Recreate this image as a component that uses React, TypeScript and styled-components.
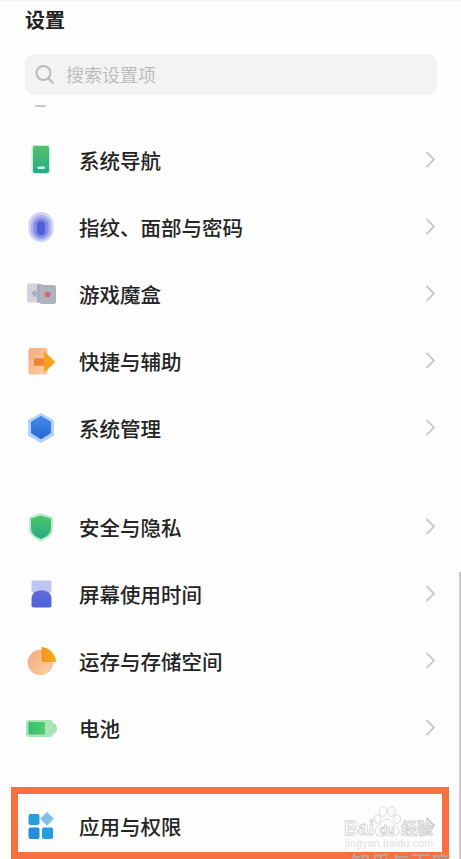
import React from 'react';
import styled, { createGlobalStyle } from 'styled-components';

const GlobalStyle = createGlobalStyle`
  * { box-sizing: border-box; }
  body { margin: 0; background: #fdfdfd; font-family: "Noto Sans CJK SC", sans-serif; }
`;

const Screen = styled.main`
  position: relative;
  width: 461px;
  height: 859px;
  overflow: hidden;
  background: #fdfdfd;
  border-top: 1px solid #f5f5f5;
`;

const Header = styled.header`
  height: 104px;
  padding: 4px 24px 0 25px;
`;

const Title = styled.h1`
  margin: 0;
  height: 30px;
  line-height: 30px;
  font-size: 20px;
  font-weight: 700;
  color: #222;
`;

const SearchBar = styled.div`
  display: flex;
  align-items: center;
  gap: 11px;
  height: 41px;
  margin-top: 19px;
  padding: 0 10px;
  border-radius: 9px;
  background: #f3f3f3;
  color: #bcbcbc;
  font-size: 18px;
  line-height: 26px;
`;

const SearchHint = styled.span`
  margin-top: -2px;
`;

const PreviousIcon = styled.div`
  width: 11px;
  height: 2px;
  margin-left: 35px;
  border-radius: 0 0 5px 5px;
  background: #c8c8ca;
`;

const List = styled.ul<{ $top: number }>`
  list-style: none;
  margin: ${p => p.$top}px 0 0;
  padding: 0;
`;

const Row = styled.li`
  display: flex;
  align-items: center;
  height: 67.2px;
  padding: 0 24px 0 25px;
`;

const IconSlot = styled.span`
  width: 54px;
  height: 32px;
  flex: none;
`;

const Label = styled.span`
  flex: 1;
  font-size: 20.5px;
  font-weight: 500;
  line-height: 30px;
  color: #242424;
`;

const Highlight = styled.div`
  position: absolute;
  left: 11px;
  top: 786px;
  width: 438px;
  height: 72px;
  border: 7px solid #f86f40;
`;

const ScrollThumb = styled.div`
  position: absolute;
  right: 0;
  top: 571px;
  width: 2px;
  height: 288px;
  background: #c9c9c9;
`;

const Watermark = styled.svg`
  position: absolute;
  left: 340px;
  top: 799px;
`;

const NextLabel = styled.div`
  position: absolute;
  left: 351px;
  top: 850px;
  height: 8px;
  overflow: hidden;
  font-size: 20px;
  line-height: 24px;
  font-weight: 500;
  color: #b9a49c;
  white-space: nowrap;
`;

type Kind = 'nav' | 'finger' | 'game' | 'shortcut' | 'system' | 'shield' | 'time' | 'storage' | 'battery' | 'apps';

const drawings: Record<Kind, React.ReactNode> = {
  nav: <>
    <rect x="6.5" y="1" width="19" height="29" rx="3" fill="#c4efdc" />
    <rect x="8" y="2" width="16" height="27" rx="2" fill="url(#green)" />
    <rect x="12.5" y="22.500" width="7.5" height="2.5" rx="1" fill="#c6f6ee" />
  </>,
  finger: <>
    <rect x="3.5" y="1" width="25" height="30" rx="12.5" fill="#cfd3f5" />
    <rect x="6" y="4" width="20" height="25" rx="10" fill="#aab1ee" />
    <rect x="8.500" y="7" width="15" height="20" rx="7.500" fill="#818be5" />
    <rect x="12" y="10" width="8" height="14" rx="4" fill="#505fd7" />
  </>,
  game: <>
    <rect x="2" y="5.500" width="15" height="19" rx="2" fill="#d2d3da" />
    <rect x="12" y="6.500" width="6" height="18" fill="#a5abb8" />
    <rect x="14.500" y="7" width="16.500" height="19" rx="2" fill="#adb2bc" />
    <path d="M9.500 12.500v6M6.500 15.500h6" stroke="#a6aabd" strokeWidth="2.500" />
    <circle cx="22.700" cy="16.500" r="2.800" fill="#d5686a" />
  </>,
  shortcut: <>
    <rect x="3.500" y="3" width="19" height="26.500" rx="2.500" fill="url(#peach)" />
    <path d="M9 13.500h10V8q0-1.500 1.500-.5l9 8.500q1 1 0 2l-9 8.500q-1.500 1-1.500-.5v-5.500H9z" fill="url(#orange)" />
    <path d="M9 13.500h10v7H9z" fill="#ed8435" />
  </>,
  system: <>
    <path d="M16 1.500l12.500 7v15L16 30.500l-12.500-7v-15z" fill="#b5d0f4" stroke="#b5d0f4" strokeLinejoin="round" />
    <path d="M16 4.500l9.500 5.500v11L16 27l-9.500-6V10z" fill="url(#blue)" stroke="#347bdc" strokeLinejoin="round" />
  </>,
  shield: <>
    <path d="M16 2l12 4v12c0 6-6 10-12 12.500C10 28 4 24 4 18V6z" fill="#bceccd" />
    <path d="M16 4.500l10 3v10c0 5-4 8-10 10.500-6-2.500-10-5.500-10-10.500v-10z" fill="url(#green)" />
  </>,
  time: <>
    <path d="M8.500 2.500h16q2 0 2 2v7q0 3-3 4h-14q-3-1-3-4v-7q0-2 2-2z" fill="#bfc4f1" />
    <path d="M6.500 27.500v-7c0-11 20-11 20 0v7q0 2-2 2h-16q-2 0-2-2z" fill="url(#violet)" />
  </>,
  storage: <>
    <circle cx="15.500" cy="17.500" r="12.800" fill="url(#peach)" />
    <path d="M16.500 2C24 2.500 31 8.500 31 17H18q-1.500 0-1.500-1.500z" fill="url(#orange)" />
  </>,
  battery: <>
    <rect x="1" y="8" width="27" height="17" rx="3" fill="#a9e6b6" />
    <path d="M28 11.500q4 0 4 5t-4 5z" fill="#a1e2af" />
    <rect x="3.500" y="10" width="16.500" height="12.500" rx="1" fill="url(#battery)" />
  </>,
  apps: <>
    <rect x="3.500" y="4" width="11" height="11" rx="2" fill="#289ddd" />
    <path d="M22 2.500l6.500 6.300-6.500 6.400-6.500-6.400z" fill="#80bfea" stroke="#80bfea" strokeLinejoin="round" />
    <rect x="3.500" y="17.500" width="11" height="11.500" rx="2" fill="#258fdd" />
    <rect x="17" y="17.500" width="11" height="11.500" rx="2" fill="#269ddd" />
  </>,
};

const Gradients = () => (
  <svg width="0" height="0" display="block">
    <defs>
      <linearGradient id="green" x2="0" y2="1"><stop stopColor="#50c568" /><stop offset="1" stopColor="#28aa8a" /></linearGradient>
      <linearGradient id="battery"><stop stopColor="#35bd70" /><stop offset="1" stopColor="#56cc70" /></linearGradient>
      <linearGradient id="blue" x2="0" y2="1"><stop stopColor="#468ce8" /><stop offset="1" stopColor="#2269d0" /></linearGradient>
      <linearGradient id="violet" x2="0" y2="1"><stop stopColor="#616bd8" /><stop offset="1" stopColor="#5061d9" /></linearGradient>
      <linearGradient id="peach" x2="1" y2="1"><stop stopColor="#f3ac7b" /><stop offset="1" stopColor="#fad1a8" /></linearGradient>
      <linearGradient id="orange"><stop stopColor="#ec9522" /><stop offset="1" stopColor="#fba91e" /></linearGradient>
    </defs>
  </svg>
);

const Item = ({ kind, text }: { kind: Kind; text: string }) => (
  <Row>
    <IconSlot><svg width="32" height="32" viewBox="0 0 32 32">{drawings[kind]}</svg></IconSlot>
    <Label>{text}</Label>
    <svg width="12" height="20" viewBox="0 0 12 20" fill="none" stroke="#c9c9c9" strokeWidth="1.800"><path d="M1.500 2l7.500 7.500L1.500 17" /></svg>
  </Row>
);

const BaiduMark = () => (
  <Watermark width="104" height="52" viewBox="0 0 104 52" fontFamily='"Liberation Sans", "Noto Sans CJK SC", sans-serif'>
    <g fill="#fdfdfd" stroke="#cfcfcf" strokeWidth="0.800">
      <text x="4" y="35" fontSize="20.500" fontWeight="700" textLength="30" lengthAdjust="spacingAndGlyphs">Bai</text>
      <path d="M47 19c4 0 5 4 9 7 6 5 2 11-4 10-3-1-7-1-10 0-6 1-10-5-4-10 4-3 5-7 9-7z" />
      <ellipse cx="37.500" cy="19" rx="3.300" ry="4.300" />
      <ellipse cx="43" cy="11.500" rx="3.600" ry="4.800" />
      <ellipse cx="51.500" cy="11.500" rx="3.600" ry="4.800" />
      <ellipse cx="57" cy="19" rx="3.300" ry="4.300" />
      <text x="39.500" y="33.500" fontSize="13" fontWeight="700" textLength="15" lengthAdjust="spacingAndGlyphs">du</text>
      <text x="61" y="33.500" fontSize="16" fontWeight="700" textLength="32" fontFamily="Noto Sans CJK SC">经验</text>
    </g>
    <text x="5" y="46.500" fontSize="10.500" fill="#dfdfdf" textLength="88">jingyan.baidu.com</text>
  </Watermark>
);

export default function App() {
  return (
    <Screen>
      <GlobalStyle />
      <Gradients />
      <Header>
        <Title>设置</Title>
        <SearchBar>
          <svg width="20" height="20" viewBox="0 0 20 20" fill="none" stroke="#b9b9b9" strokeWidth="2"><circle cx="8.500" cy="8" r="7" /><path d="M13.500 13.500l4.500 4.500" strokeLinecap="round" /></svg>
          <SearchHint>搜索设置项</SearchHint>
        </SearchBar>
      </Header>
      <PreviousIcon />
      <List $top={19}>
        <Item kind="nav" text="系统导航" />
        <Item kind="finger" text="指纹、面部与密码" />
        <Item kind="game" text="游戏魔盒" />
        <Item kind="shortcut" text="快捷与辅助" />
        <Item kind="system" text="系统管理" />
      </List>
      <List $top={31}>
        <Item kind="shield" text="安全与隐私" />
        <Item kind="time" text="屏幕使用时间" />
        <Item kind="storage" text="运存与存储空间" />
        <Item kind="battery" text="电池" />
      </List>
      <List $top={31}>
        <Item kind="apps" text="应用与权限" />
      </List>
      <Highlight />
      <BaiduMark />
      <NextLabel>知乎与百度</NextLabel>
      <ScrollThumb />
    </Screen>
  );
}
